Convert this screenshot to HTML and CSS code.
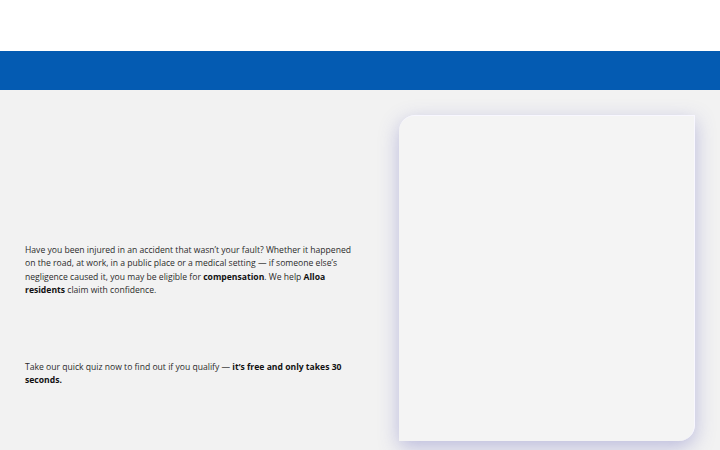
FILE: index.html
```html
<!DOCTYPE html>
<html lang="en">
<head>
<meta charset="utf-8">
<link rel="stylesheet" href="styles.css">
</head>
<body>
<header class="topbar"></header>
<nav class="bluebar"></nav>
<main class="hero">
  <section class="copy">
    <p class="lead">Have you been injured in an accident that wasn’t your fault? Whether it happened on the road, at work, in a public place or a medical setting — if someone else’s negligence caused it, you may be eligible for <strong>compensation</strong>. We help <strong>Alloa residents</strong> claim with confidence.</p>
    <p class="cta">Take our quick quiz now to find out if you qualify — <strong>it’s free and only takes 30 seconds.</strong></p>
  </section>
  <aside class="card"></aside>
</main>
</body>
</html>
```
FILE: styles.css
```css
html, body {
  margin: 0;
  padding: 0;
}
body {
  background: #f2f2f2;
  font-family: "Open Sans", "Liberation Sans", sans-serif;
  color: #2b2b2b;
  width: 720px;
  height: 450px;
  overflow: hidden;
}
.topbar {
  height: 51px;
  background: #ffffff;
}
.bluebar {
  height: 39px;
  background: #045bb2;
}
.hero {
  display: flex;
  justify-content: space-between;
  padding: 25px 25px 0 25px;
}
.copy {
  width: 332px;
  padding-top: 129px;
}
.lead, .cta {
  margin: 0;
  font-size: 8.6px;
  line-height: 13.4px;
  font-weight: 500;
}
.cta {
  margin-top: 63px;
}
strong {
  color: #111;
  font-weight: 700;
}
.card {
  width: 296px;
  height: 326px;
  background: #f4f4f4;
  border-top: 1px solid #f8f7ff;
  border-right: 1px solid #f8f7ff;
  box-sizing: border-box;
  border-radius: 16px 0 16px 0;
  box-shadow: 0 6px 20px rgba(80, 80, 180, 0.34);
}
```
